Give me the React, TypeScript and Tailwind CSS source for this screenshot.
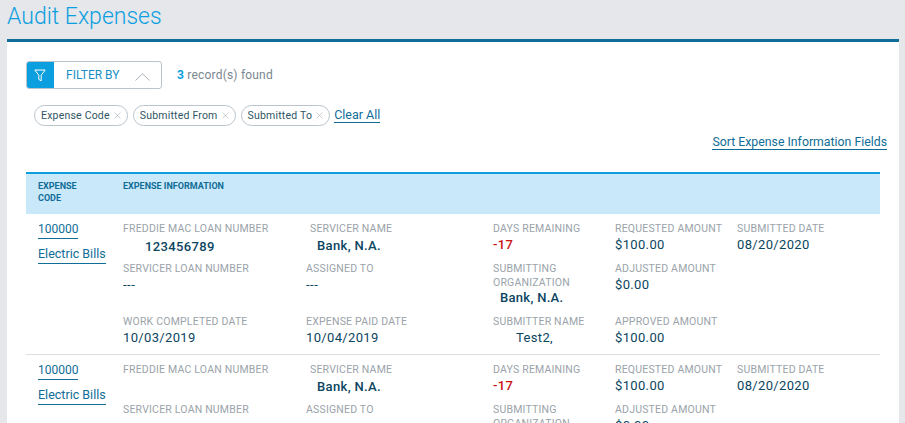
import { X } from "lucide-react";

const chips = ["Expense Code", "Submitted From", "Submitted To"];

function Field({ label, value, labelClass = "", valueClass = "" }: { label: string; value?: string; labelClass?: string; valueClass?: string }) {
  return (
    <div>
      <div className={`text-[10.5px] leading-[14px] tracking-[0.2px] text-[#9aa3aa] ${labelClass}`}>{label}</div>
      {value && <div className={`text-[13px] font-[450] leading-[18px] tracking-[0.35px] text-[#0b4560] ${valueClass}`}>{value}</div>}
    </div>
  );
}

function Row({ loan }: { loan?: string }) {
  return (
    <div className="flex h-[141px] shrink-0 border-b border-[#dcdee0]">
      <div className="w-[97px] shrink-0 pt-[7px] pl-3 text-[12.5px] text-[#0f6d97]">
        <a className="block w-fit border-b border-[#0f6d97] text-[12px] leading-[16px] pb-[1px]">100000</a>
        <a className="mt-[7px] block w-fit border-b border-[#0f6d97] leading-[16px] pb-[1px]">Electric Bills</a>
      </div>
      <div className="grid grid-cols-[183px_187px_122px_122px_1fr] grid-rows-[40px_53px_1fr] pt-[8px]">
        <Field label="FREDDIE MAC LOAN NUMBER" value={loan} valueClass="pl-[22px] pt-[2px] !font-medium" />
        <Field label="SERVICER NAME" value="Bank, N.A." labelClass="pl-[4px]" valueClass="pl-[11px] pt-px !font-medium" />
        <Field label="DAYS REMAINING" value="-17" valueClass="!text-[#cc1111] !font-medium" />
        <Field label="REQUESTED AMOUNT" value="$100.00" />
        <Field label="SUBMITTED DATE" value="08/20/2020" />

        <Field label="SERVICER LOAN NUMBER" value="---" valueClass="!tracking-[0.5px]" />
        <Field label="ASSIGNED TO" value="---" valueClass="!tracking-[0.5px]" />
        <div>
          <div className="w-[90px] text-[10.5px] leading-[14px] tracking-[0.2px] text-[#9aa3aa]">SUBMITTING ORGANIZATION</div>
          <div className="-mt-px pl-[7px] text-[13px] font-medium leading-[18px] tracking-[0.3px] text-[#0b4560]">Bank, N.A.</div>
        </div>
        <Field label="ADJUSTED AMOUNT" value="$0.00" />
        <div />

        <Field label="WORK COMPLETED DATE" value="10/03/2019" />
        <Field label="EXPENSE PAID DATE" value="10/04/2019" />
        <Field label="SUBMITTER NAME" value="Test2," valueClass="pl-[23px]" />
        <Field label="APPROVED AMOUNT" value="$100.00" />
        <div />
      </div>
    </div>
  );
}

export default function App() {
  return (
    <div className="h-screen overflow-hidden bg-[#e6e7eb] pl-[7px] pr-[6px] font-['Roboto',sans-serif]">
      <h1 className="h-[39px] pt-[1px] text-[23px] font-light leading-[32px] text-[#0c9fdf]">Audit Expenses</h1>
      <div className="h-[400px] border-t-[3px] border-[#0f6d97] bg-white px-[19px] pt-[19px]">
        {/* filtre */}
        <div className="flex items-center">
          <div className="flex h-[28px] w-[136px] overflow-hidden rounded-[3px] border border-[#b9c4cc]">
            <div className="-my-px -ml-px flex w-[28px] items-center justify-center bg-[#0c9fdf]">
              <svg width="12" height="13" viewBox="0 0 12 13" fill="none" stroke="white" strokeWidth="1">
                <path d="M0.8 1h10.4L7.2 6.2v5.6l-2.4-1.4V6.2z" />
              </svg>
            </div>
            <span className="ml-3 text-[12px] leading-[26px] text-[#1b8fc4]">FILTER BY</span>
            <svg className="ml-[16px] mt-[11px]" width="15" height="8" viewBox="0 0 15 8" fill="none" stroke="#a9b2b9" strokeWidth="1">
              <path d="M0.5 7.5L7.5 0.8l7 6.7" />
            </svg>
          </div>
          <div className="ml-[15px] text-[12px] tracking-[0.2px] text-[#7b8790]">
            <span className="font-bold text-[#0c9fdf]">3</span> record(s) found
          </div>
        </div>

        <div className="ml-[8px] mt-[16px] flex items-center gap-[5px]">
          {chips.map((chip) => (
            <span key={chip} className="flex h-[21px] items-center gap-[2px] rounded-full border border-[#b9c4cc] pl-[6px] pr-[4px] text-[10.5px] tracking-[0.2px] text-[#2f5566]">
              {chip}
              <X size={11} strokeWidth={1} className="text-[#8f9aa2]" />
            </span>
          ))}
          <a className="-ml-px border-b border-[#0f6d97] text-[12.5px] leading-[14px] text-[#0f6d97]">Clear All</a>
        </div>

        <div className="mt-[9px] flex justify-end">
          <a className="-mr-[7px] border-b border-[#0f6d97] text-[12.3px] leading-[14px] text-[#0f6d97]">Sort Expense Information Fields</a>
        </div>

        {/* tableau */}
        <div className="mt-[22px] flex h-[42px] border-t-2 border-[#0c9fdf] bg-[#c9e8fa] pt-[6px] text-[9px] font-bold leading-[12px] text-[#0f6d97]">
          <div className="w-[97px] pl-3">
            EXPENSE
            <br />
            CODE
          </div>
          <div>EXPENSE INFORMATION</div>
        </div>
        <Row loan="123456789" />
        <Row />
      </div>
    </div>
  );
}
